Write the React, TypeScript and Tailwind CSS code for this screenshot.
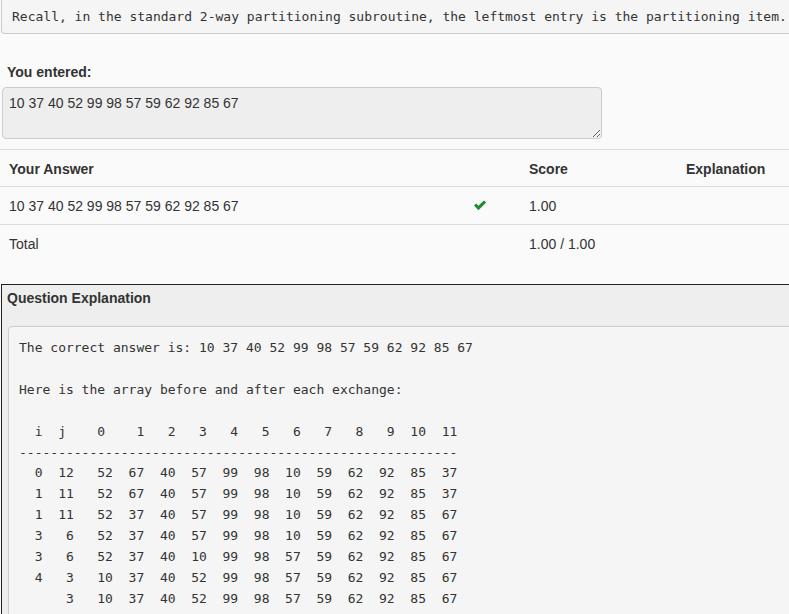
const ANSWER = "10 37 40 52 99 98 57 59 62 92 85 67";

const TRACE = [
  "  i  j    0    1   2   3   4   5   6   7   8   9  10  11",
  "--------------------------------------------------------",
  "  0  12   52  67  40  57  99  98  10  59  62  92  85  37",
  "  1  11   52  67  40  57  99  98  10  59  62  92  85  37",
  "  1  11   52  37  40  57  99  98  10  59  62  92  85  67",
  "  3   6   52  37  40  57  99  98  10  59  62  92  85  67",
  "  3   6   52  37  40  10  99  98  57  59  62  92  85  67",
  "  4   3   10  37  40  52  99  98  57  59  62  92  85  67",
  "      3   10  37  40  52  99  98  57  59  62  92  85  67",
];

function Check() {
  return (
    <svg width="14" height="11" viewBox="0 0 14 11" className="block">
      <path
        d="M1 5.6 L3.2 3.6 L5.4 5.8 L11 0.6 L13.2 2.6 L5.4 10.2 Z"
        fill="#1f8a3a"
      />
    </svg>
  );
}

const mono = "font-['DejaVu_Sans_Mono',Menlo,monospace]";

export default function App() {
  return (
    <div className="h-[614px] w-[789px] overflow-hidden bg-[#fafafa] font-['Liberation_Sans',Arial,sans-serif] text-[14px] leading-[20px] text-[#333]">
      <div className="w-[840px]">
        {/* question text */}
        <div className="ml-[1px] rounded-bl-[4px] border-x border-b border-[#ccc] bg-[#f5f5f5] pt-[7px] pb-[6px] pl-[10px]">
          <div className={`${mono} whitespace-pre text-[13px] leading-[20px] text-[#333]`}>
            Recall, in the standard 2-way partitioning subroutine, the leftmost entry is the partitioning item.
          </div>
        </div>

        {/* entered answer */}
        <div className="mt-[28px] pl-[7px] font-bold">You entered:</div>
        <textarea
          readOnly
          defaultValue={ANSWER}
          className="mt-[5px] ml-[2px] block h-[52px] w-[600px] rounded-[4px] border border-[#ccc] bg-[#eee] px-[6px] pt-[5px] pb-[3px] font-['Liberation_Sans',Arial,sans-serif] text-[14px] leading-[20px] text-[#333] outline-none"
        />

        {/* score table */}
        <div className="mt-[10px] w-[789px]">
          <div className="grid h-[38px] grid-cols-[466px_55px_157px_1fr] items-center border-y border-[#ddd] pt-[1px] font-bold">
            <div className="pl-[9px]">Your Answer</div>
            <div />
            <div className="pl-[8px]">Score</div>
            <div className="pl-[8px]">Explanation</div>
          </div>
          <div className="grid h-[38px] grid-cols-[466px_55px_157px_1fr] items-center border-b border-[#ddd]">
            <div className="pl-[9px]">{ANSWER}</div>
            <div className="pl-[7px]">
              <Check />
            </div>
            <div className="pl-[8px]">1.00</div>
            <div />
          </div>
          <div className="grid h-[37px] grid-cols-[466px_55px_157px_1fr] items-center">
            <div className="pl-[9px]">Total</div>
            <div />
            <div className="pl-[8px]">1.00 / 1.00</div>
            <div />
          </div>
        </div>

        {/* explanation panel */}
        <div className="mt-[22px] ml-[1px] h-[400px] border border-[#222] bg-[#eee] pl-[6px] pt-[4px]">
          <div className="-ml-[1px] font-bold leading-[18px]">Question Explanation</div>
          <div className="mt-[19px] rounded-[4px] border border-[#ccc] bg-[#f5f5f5] px-[10px] pt-[11px] pb-[20px]">
            <pre className={`${mono} text-[13px] leading-[20.9px] text-[#333]`}>
              {"The correct answer is: " + ANSWER}
              {"\n\n"}
              {"Here is the array before and after each exchange:"}
              {"\n\n"}
              {TRACE.join("\n")}
            </pre>
          </div>
        </div>
      </div>
    </div>
  );
}
